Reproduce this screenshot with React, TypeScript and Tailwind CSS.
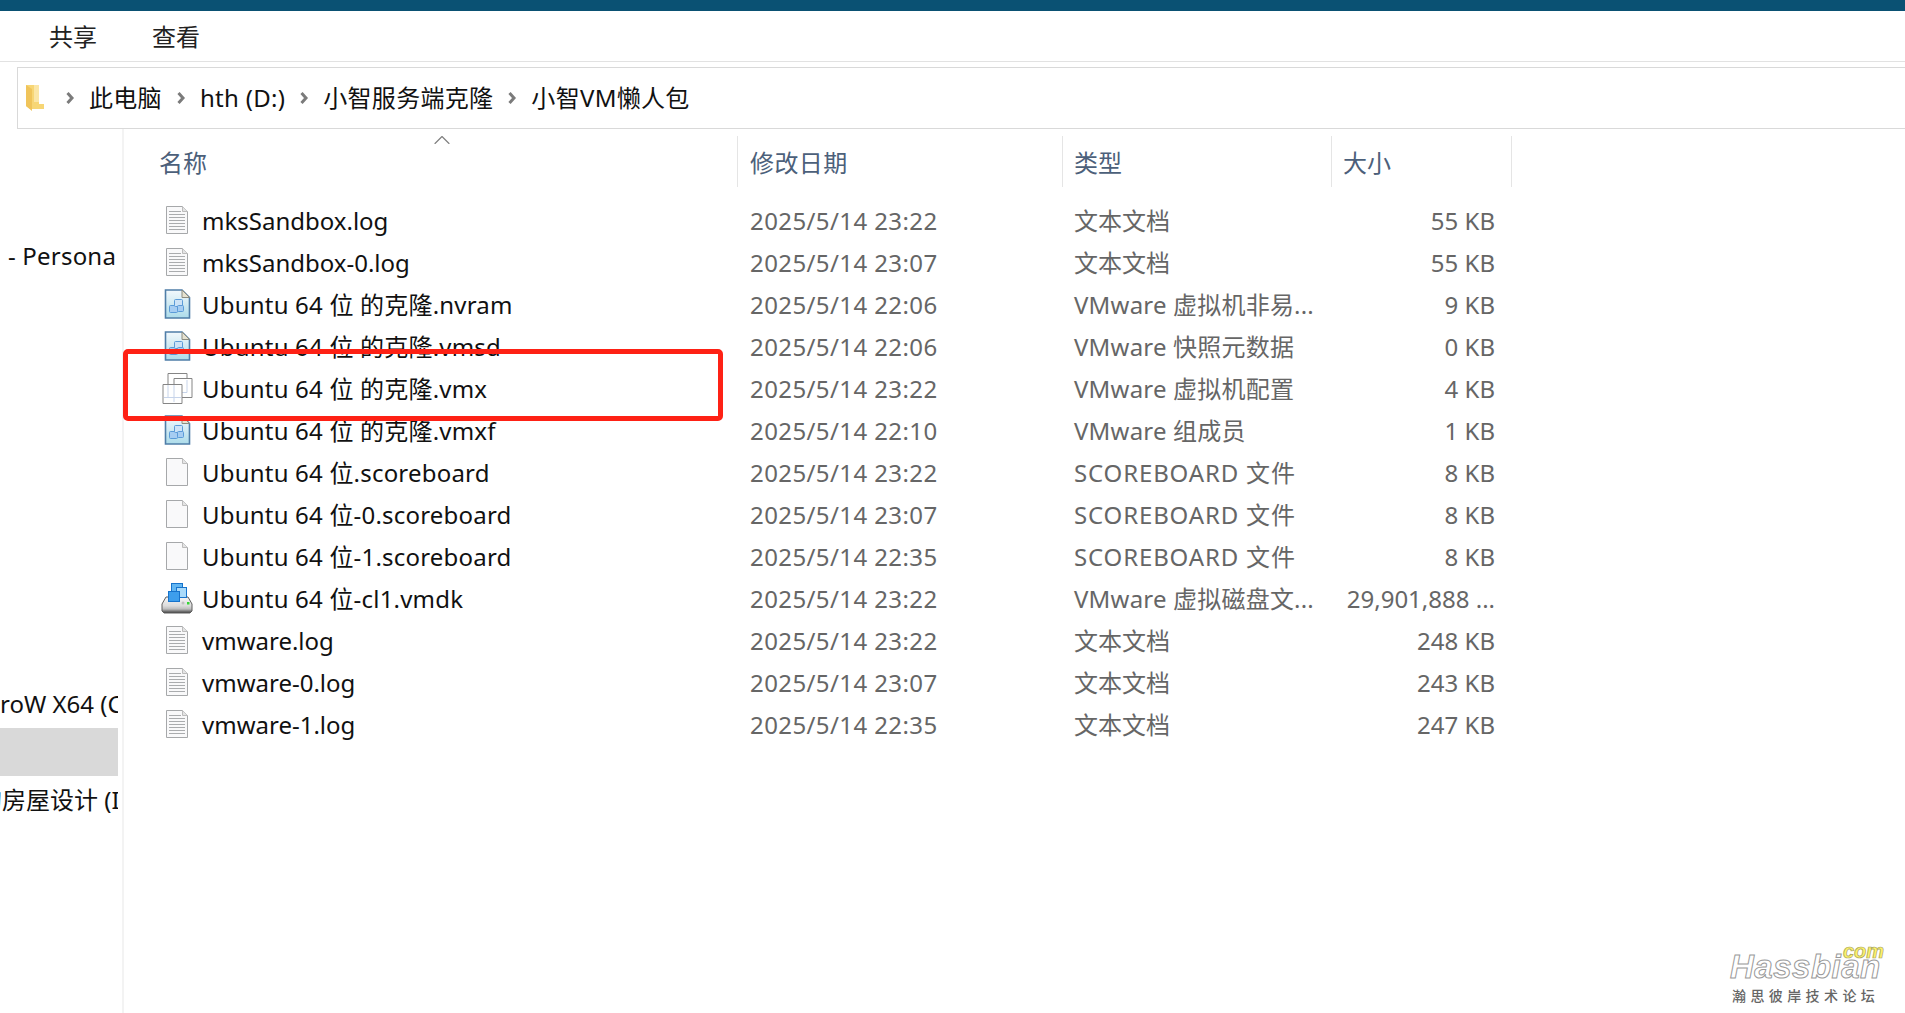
import { ChevronUp } from 'lucide-react'

const rows = [
  { icon: 'log', name: 'mksSandbox.log', date: '2025/5/14 23:22', type: '文本文档', size: '55 KB' },
  { icon: 'log', name: 'mksSandbox-0.log', date: '2025/5/14 23:07', type: '文本文档', size: '55 KB' },
  { icon: 'vm', name: 'Ubuntu 64 位 的克隆.nvram', date: '2025/5/14 22:06', type: 'VMware 虚拟机非易...', size: '9 KB' },
  { icon: 'vm', name: 'Ubuntu 64 位 的克隆.vmsd', date: '2025/5/14 22:06', type: 'VMware 快照元数据', size: '0 KB' },
  { icon: 'vmx', name: 'Ubuntu 64 位 的克隆.vmx', date: '2025/5/14 23:22', type: 'VMware 虚拟机配置', size: '4 KB' },
  { icon: 'vm', name: 'Ubuntu 64 位 的克隆.vmxf', date: '2025/5/14 22:10', type: 'VMware 组成员', size: '1 KB' },
  { icon: 'blank', name: 'Ubuntu 64 位.scoreboard', date: '2025/5/14 23:22', type: 'SCOREBOARD 文件', size: '8 KB' },
  { icon: 'blank', name: 'Ubuntu 64 位-0.scoreboard', date: '2025/5/14 23:07', type: 'SCOREBOARD 文件', size: '8 KB' },
  { icon: 'blank', name: 'Ubuntu 64 位-1.scoreboard', date: '2025/5/14 22:35', type: 'SCOREBOARD 文件', size: '8 KB' },
  { icon: 'disk', name: 'Ubuntu 64 位-cl1.vmdk', date: '2025/5/14 23:22', type: 'VMware 虚拟磁盘文...', size: '29,901,888 ...' },
  { icon: 'log', name: 'vmware.log', date: '2025/5/14 23:22', type: '文本文档', size: '248 KB' },
  { icon: 'log', name: 'vmware-0.log', date: '2025/5/14 23:07', type: '文本文档', size: '243 KB' },
  { icon: 'log', name: 'vmware-1.log', date: '2025/5/14 22:35', type: '文本文档', size: '247 KB' },
]

const crumbs = ['此电脑', 'hth (D:)', '小智服务端克隆', '小智VM懒人包']

function typeTracking(type: string) {
  if (type.startsWith('SCORE')) return 'tracking-[0.85px]'
  if (type.startsWith('VM')) return 'tracking-[0.2px]'
  return ''
}

function PageBase({ children }: { children?: React.ReactNode }) {
  return (
    <svg width="28" height="28" viewBox="0 0 28 28">
      <path d="M3.5 .5H19.5L24.5 5.5V27.5H3.5Z" fill="#f9f9fa" stroke="#a6a8aa" />
      <path d="M19.5 .5V5.5H24.5" fill="#e4e4e4" stroke="#bcbcbc" />
      {children}
    </svg>
  )
}

function FileIcon({ kind }: { kind: string }) {
  if (kind === 'log') {
    return (
      <PageBase>
        <path
          d="M6 5.5H18M6 8.5H22M6 11.5H22M6 14.5H22M6 17.5H22M6 20.5H22M6 23.5H22"
          stroke="#aaacae"
          strokeWidth="1"
        />
      </PageBase>
    )
  }
  if (kind === 'blank') return <PageBase />
  if (kind === 'vm') {
    return (
      <svg width="29" height="30" viewBox="0 0 29 30">
        <defs>
          <linearGradient id="vmfill" x1="0" y1="0" x2="0" y2="1">
            <stop offset="0" stopColor="#f2f8fc" />
            <stop offset="1" stopColor="#addcea" />
          </linearGradient>
        </defs>
        <path d="M2.5 1H19L26.5 8.5V29H2.5Z" fill="url(#vmfill)" stroke="#4f7ea8" strokeWidth="1.6" />
        <path d="M19 1V8.5H26.5Z" fill="#e6e2d0" stroke="#8c8c80" />
        <rect x="6.5" y="16.5" width="8" height="7" rx="1" fill="#a6cdf2" stroke="#5b9bd8" />
        <rect x="11.5" y="10.5" width="8" height="7" rx="1" fill="#cde3f7" stroke="#5b9bd8" />
        <rect x="14.5" y="16.5" width="6" height="6" rx="1" fill="#a6cdf2" stroke="#5b9bd8" />
      </svg>
    )
  }
  if (kind === 'vmx') {
    return (
      <svg width="31" height="32" viewBox="0 0 31 32">
        <path d="M6 1.5H25V20.5H6Z" fill="#fff" stroke="#858585" />
        <path d="M12 6.5H30V25.5H12Z" fill="#fff" stroke="#858585" />
        <path d="M25 8V20.5H19" fill="none" stroke="#c7d4ea" />
        <path d="M1 12.5H20V31.5H1Z" fill="#fff" stroke="#858585" />
        <path d="M2 25.5H19M12 13V30M6 13V25" fill="none" stroke="#c7d4ea" />
      </svg>
    )
  }
  return (
    <svg width="32" height="32" viewBox="0 0 32 32">
      <defs>
        <linearGradient id="drive" x1="0" y1="0" x2="0" y2="1">
          <stop offset="0" stopColor="#f6f6f6" />
          <stop offset="0.55" stopColor="#dcdcdc" />
          <stop offset="0.75" stopColor="#bdbdbd" />
          <stop offset="1" stopColor="#3d3d3d" />
        </linearGradient>
      </defs>
      <path d="M5 15H27L31 22V29L29 31H3L1 29V22Z" fill="url(#drive)" stroke="#5f5f5f" />
      <circle cx="22" cy="21" r="1.5" fill="#c0c0c0" />
      <rect x="26" y="20" width="2.5" height="2.5" fill="#35d635" />
      <rect x="10.5" y="1.5" width="11" height="11" fill="#62b6f2" stroke="#1673cc" />
      <rect x="15.5" y="5.5" width="10" height="10" fill="#a9dafa" stroke="#1673cc" />
      <rect x="7.5" y="9.5" width="11" height="10" fill="#3d9eec" stroke="#1673cc" />
    </svg>
  )
}

function Chevron() {
  return (
    <svg width="10" height="14" viewBox="0 0 10 14" className="shrink-0">
      <path d="M2.5 2L7 7L2.5 12" fill="none" stroke="#7b7b7b" strokeWidth="3" />
    </svg>
  )
}

function Watermark() {
  return (
    <div className="absolute left-[1730px] top-[944px] w-[160px] h-[62px]">
      <span className="absolute right-[6px] top-[-8px] font-['Liberation_Sans',sans-serif] text-[20px] font-bold italic text-[#fdf26a] [-webkit-text-stroke:0.7px_#a8a45c]">
        com
      </span>
      <span className="absolute left-0 top-[4px] font-['Liberation_Sans',sans-serif] text-[33px] leading-[38px] font-bold italic tracking-[0.5px] text-white [-webkit-text-stroke:1px_#999999]">
        Hassbian
      </span>
      <span className="absolute left-[2px] top-[42px] whitespace-nowrap text-[14px] leading-5 font-medium tracking-[4.4px] text-[#666666]">
        瀚思彼岸技术论坛
      </span>
    </div>
  )
}

export default function App() {
  return (
    <div className="relative h-[1013px] overflow-hidden bg-white font-['Noto_Sans','Noto_Sans_CJK_SC',sans-serif] text-[24px] text-[#111111]">
      <div className="h-[11px] bg-[#0a5173]" />

      {/* Ribbon tabs */}
      <div className="flex h-[51px] items-center gap-[55px] border-b border-[#e2e2e2] pt-[2px] pl-[49px] text-[#222222]">
        <span>共享</span>
        <span>查看</span>
      </div>

      {/* Address bar */}
      <div className="mt-[5px] ml-[17px] flex h-[62px] items-center border border-r-0 border-[#d9d9d9] pl-[7px]">
        <svg width="20" height="28" viewBox="0 0 20 28" className="shrink-0">
          <path d="M1 1H14V20H19V25H5L1 22Z" fill="#f7d675" />
          <path d="M1 1L7 5V27L1 22Z" fill="#f0c45a" />
          <path d="M9 1H14V18H9Z" fill="#fbe6a6" />
        </svg>
        <div className="ml-[20px] flex items-center tracking-[0.3px] whitespace-nowrap">
          {crumbs.map((c) => (
            <div key={c} className="flex items-center">
              <Chevron />
              <span className="mr-[14px] ml-[14px]">{c}</span>
            </div>
          ))}
        </div>
      </div>

      <div className="flex">
        {/* Navigation pane, cropped */}
        <div className="w-[118px] shrink-0 overflow-hidden pt-[103px] whitespace-nowrap">
          <div className="flex h-[48px] items-center pl-[8px] tracking-[0.2px]">- Persona</div>
          <div className="h-[400px]" />
          <div className="flex h-[48px] items-center">roW X64 (C</div>
          <div className="h-[48px] bg-[#d9d9d9]" />
          <div className="flex h-[48px] items-center">
            <span className="ml-[-22px]">的房屋设计 (I</span>
          </div>
        </div>

        {/* File list */}
        <div className="ml-[4px] h-[885px] flex-1 border-l-2 border-[#f3f3f3]">
          <div className="relative flex h-[58px] items-stretch pt-[7px] text-[#4c607a]">
            <ChevronUp className="absolute left-[304px] top-[-3px] h-[28px] w-[28px] text-[#808080]" strokeWidth={1} />
            <div className="flex w-[613px] items-center pt-[2px] pl-[35px]">名称</div>
            <div className="flex w-[325px] items-center border-l border-[#e5e5e5] pt-[2px] pl-[12px] tracking-[0.4px]">修改日期</div>
            <div className="flex w-[269px] items-center border-l border-[#e5e5e5] pt-[2px] pl-[11px]">类型</div>
            <div className="flex w-[181px] items-center border-x border-[#e5e5e5] pt-[2px] pl-[11px]">大小</div>
          </div>
          <div className="pt-[13px]">
            {rows.map((r) => (
              <div key={r.name} className="flex h-[42px] items-center whitespace-nowrap">
                <div className="flex w-[613px] items-center">
                  <div className="flex w-[78px] shrink-0 justify-end pr-[8px]">
                    <div className="-mt-[3px] flex w-[34px] justify-center">
                      <FileIcon kind={r.icon} />
                    </div>
                  </div>
                  <span className={r.name.startsWith('Ubuntu') ? 'tracking-[0.2px]' : ''}>{r.name}</span>
                </div>
                <div className="w-[325px] pl-[13px] tracking-[0.4px] text-[#666666]">{r.date}</div>
                <div className={`w-[269px] pl-[12px] text-[#666666] ${typeTracking(r.type)}`}>{r.type}</div>
                <div className="w-[164px] text-right text-[#666666]">{r.size}</div>
              </div>
            ))}
          </div>
        </div>
      </div>

      {/* Red annotation box */}
      <div className="absolute left-[123px] top-[349px] h-[72px] w-[600px] rounded-[5px] border-[5px] border-[#fe2115]" />

      <Watermark />
    </div>
  )
}
